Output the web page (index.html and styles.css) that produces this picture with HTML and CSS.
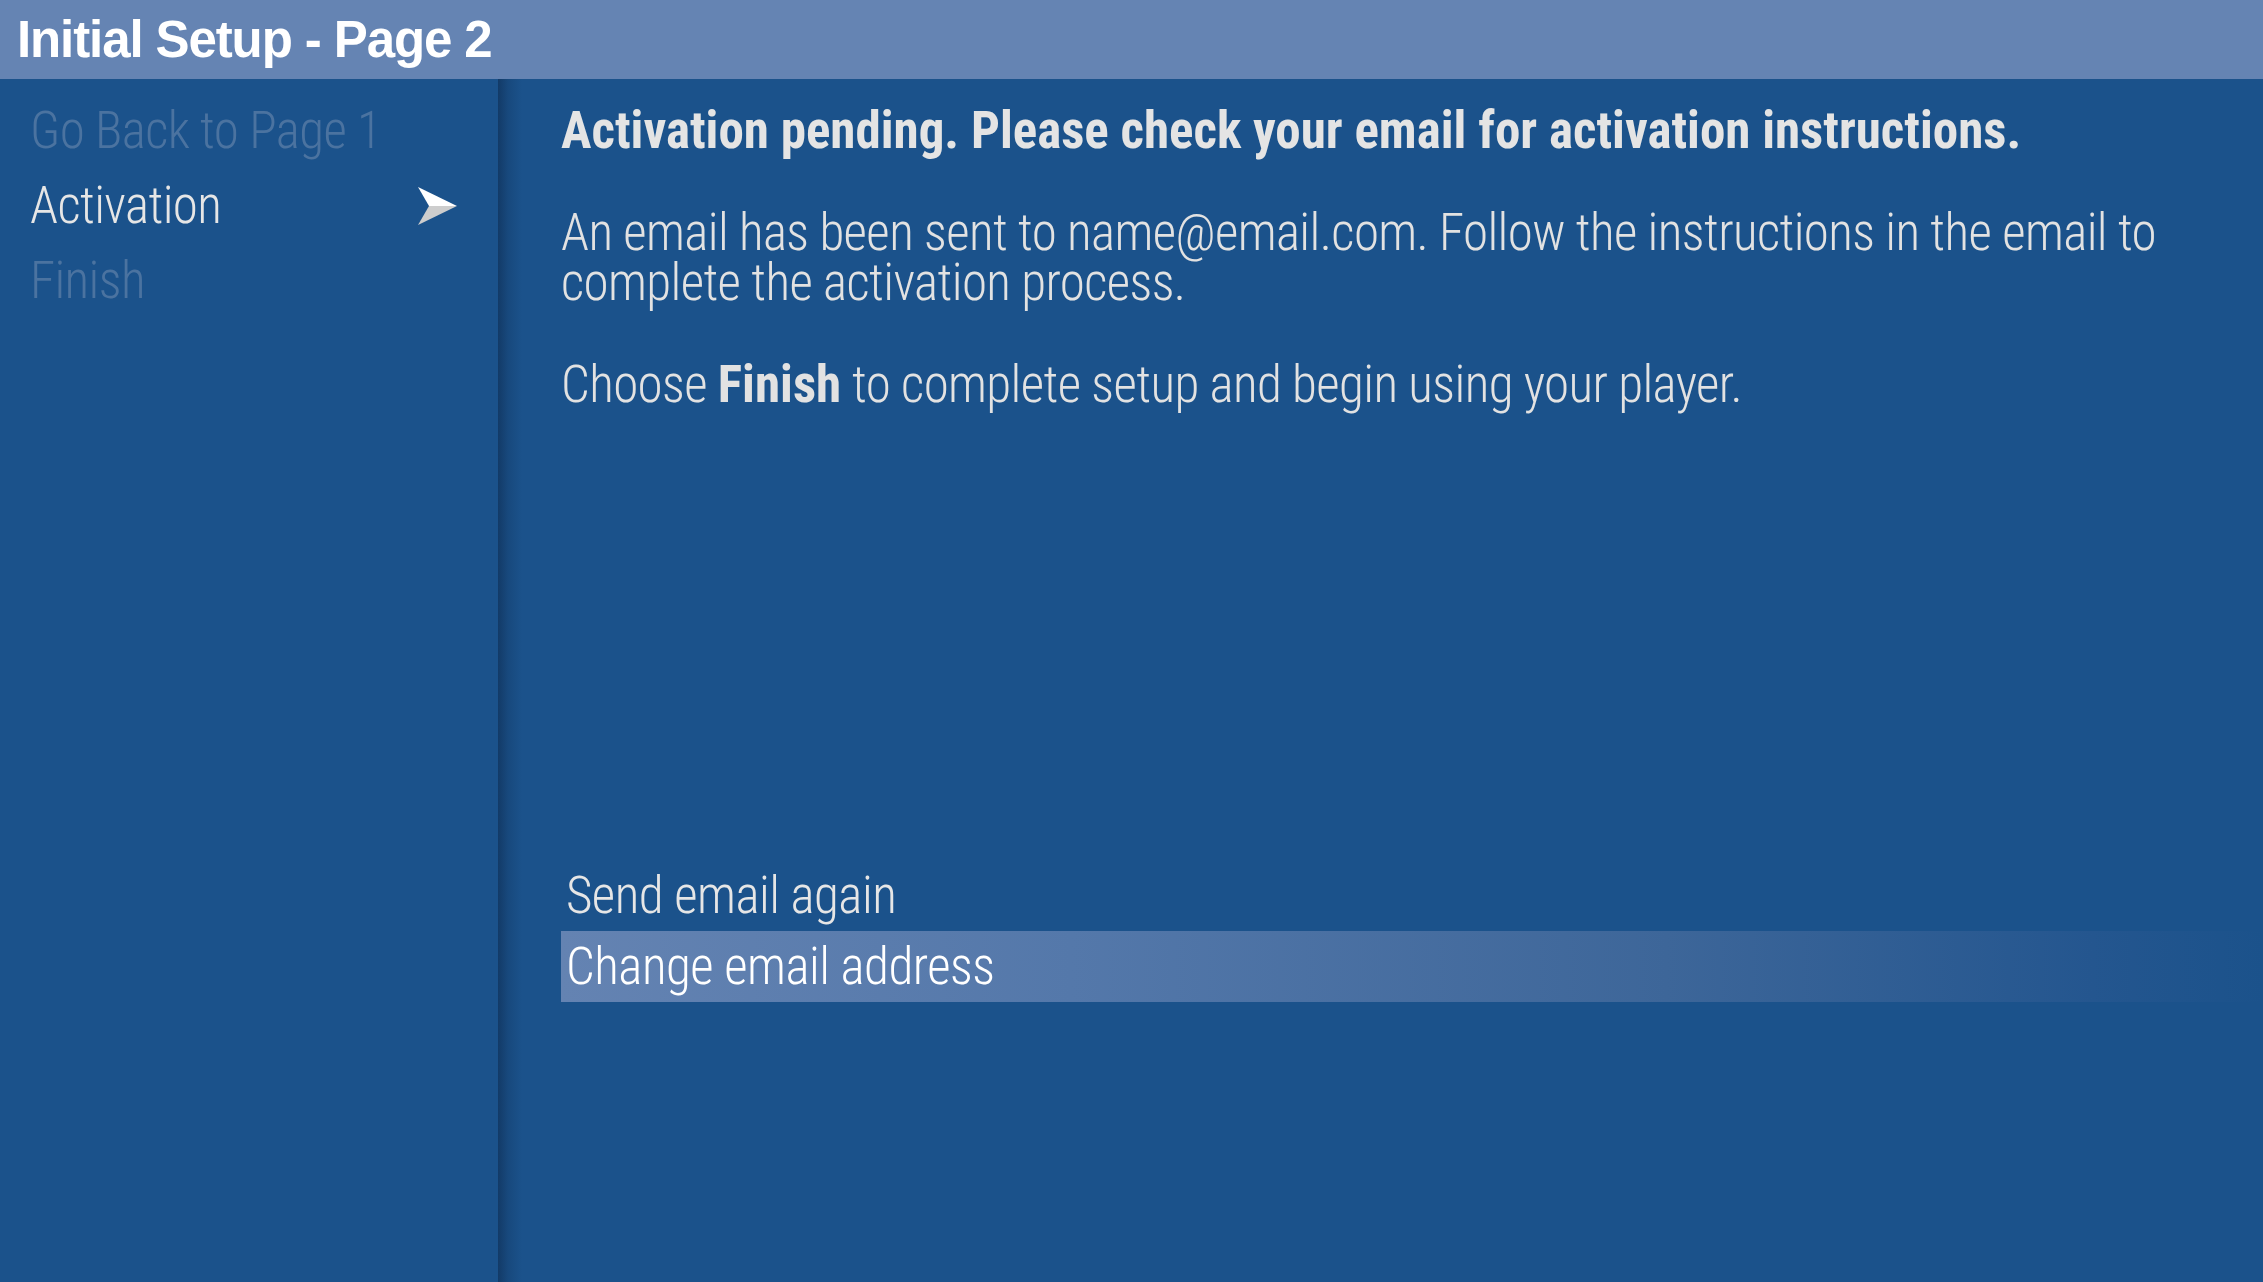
FILE: index.html
```html
<!DOCTYPE html>
<html lang="en">
<head>
<meta charset="utf-8">
<title>Initial Setup - Page 2</title>
<link rel="stylesheet" href="styles.css">
</head>
<body>
<div class="app">
  <header class="topbar">
    <h1 class="title">Initial Setup - Page 2</h1>
  </header>
  <div class="layout">
    <nav class="sidebar">
      <div class="nav-item disabled">Go Back to Page 1</div>
      <div class="nav-item current">
        <span>Activation</span>
        <svg class="nav-arrow" viewBox="0 0 39 38" width="39" height="38" aria-hidden="true">
          <polygon points="0,0 39,19 11,19" fill="#ffffff"/>
          <polygon points="11,19 39,19 0,38" fill="#cdcdcd"/>
        </svg>
      </div>
      <div class="nav-item disabled">Finish</div>
    </nav>
    <main class="content">
      <h2 class="headline">Activation pending. Please check your email for activation instructions.</h2>
      <p class="text">An email has been sent to name@email.com. Follow the instructions in the email to complete the activation process.</p>
      <p class="text">Choose <b>Finish</b> to complete setup and begin using your player.</p>
      <div class="actions">
        <div class="action">Send email again</div>
        <div class="action selected">Change email address</div>
      </div>
    </main>
  </div>
</div>
</body>
</html>
```
FILE: styles.css
```css
* { box-sizing: border-box; }
html, body {
  margin: 0;
  padding: 0;
  height: 100%;
}
body {
  background: #1b528b;
  font-family: "Roboto Condensed", "Liberation Sans Narrow", "DejaVu Sans Condensed", Roboto, sans-serif;
  font-stretch: condensed;
  color: #e2e2e2;
  overflow: hidden;
}
.app {
  display: flex;
  flex-direction: column;
  height: 100vh;
}
.topbar {
  height: 79px;
  flex: 0 0 79px;
  background: #6584b3;
  display: flex;
  align-items: center;
  padding-left: 17px;
}
.title {
  margin: 0;
  font-family: "Liberation Sans", Arial, sans-serif;
  font-stretch: normal;
  font-weight: 700;
  font-size: 51px;
  letter-spacing: -1.1px;
  color: #ffffff;
  line-height: 1;
}
.layout {
  flex: 1;
  display: flex;
}
.sidebar {
  width: 498px;
  flex: 0 0 498px;
  padding: 14px 0 0 30px;
  display: flex;
  flex-direction: column;
}
.nav-item {
  height: 75px;
  display: flex;
  align-items: center;
  justify-content: space-between;
  padding-right: 41px;
  font-size: 51px;
  font-weight: 300;
  letter-spacing: -0.6px;
  color: #e6e6e6;
}
.nav-item.disabled {
  color: #4b73a0;
}
.nav-arrow {
  display: block;
}
.content {
  flex: 1;
  background: linear-gradient(to right, rgba(8, 30, 60, 0.45) 0, rgba(8, 30, 60, 0.18) 10px, rgba(8, 30, 60, 0) 24px), #1b528b;
  padding: 27px 0 0 63px;
  display: flex;
  flex-direction: column;
}
.headline {
  margin: 0;
  font-size: 51px;
  font-weight: 700;
  line-height: 50px;
  color: #e4e4e4;
}
.text {
  margin: 52px 0 0 0;
  font-size: 51px;
  font-weight: 300;
  letter-spacing: -0.6px;
  line-height: 50px;
  max-width: 1620px;
}
.text + .text {
  margin-top: 52px;
}
.text b {
  font-weight: 700;
  letter-spacing: 0;
}
.actions {
  margin-top: 450px;
  display: flex;
  flex-direction: column;
}
.action {
  height: 71px;
  display: flex;
  align-items: center;
  padding-left: 5px;
  font-size: 51px;
  font-weight: 300;
  letter-spacing: -0.5px;
  color: #e6e6e6;
}
.action.selected {
  color: #ffffff;
  background: linear-gradient(to right, #6483b2 0%, #5478aa 30%, #3d6699 65%, #24568f 90%, #1b528b 100%);
}
```
